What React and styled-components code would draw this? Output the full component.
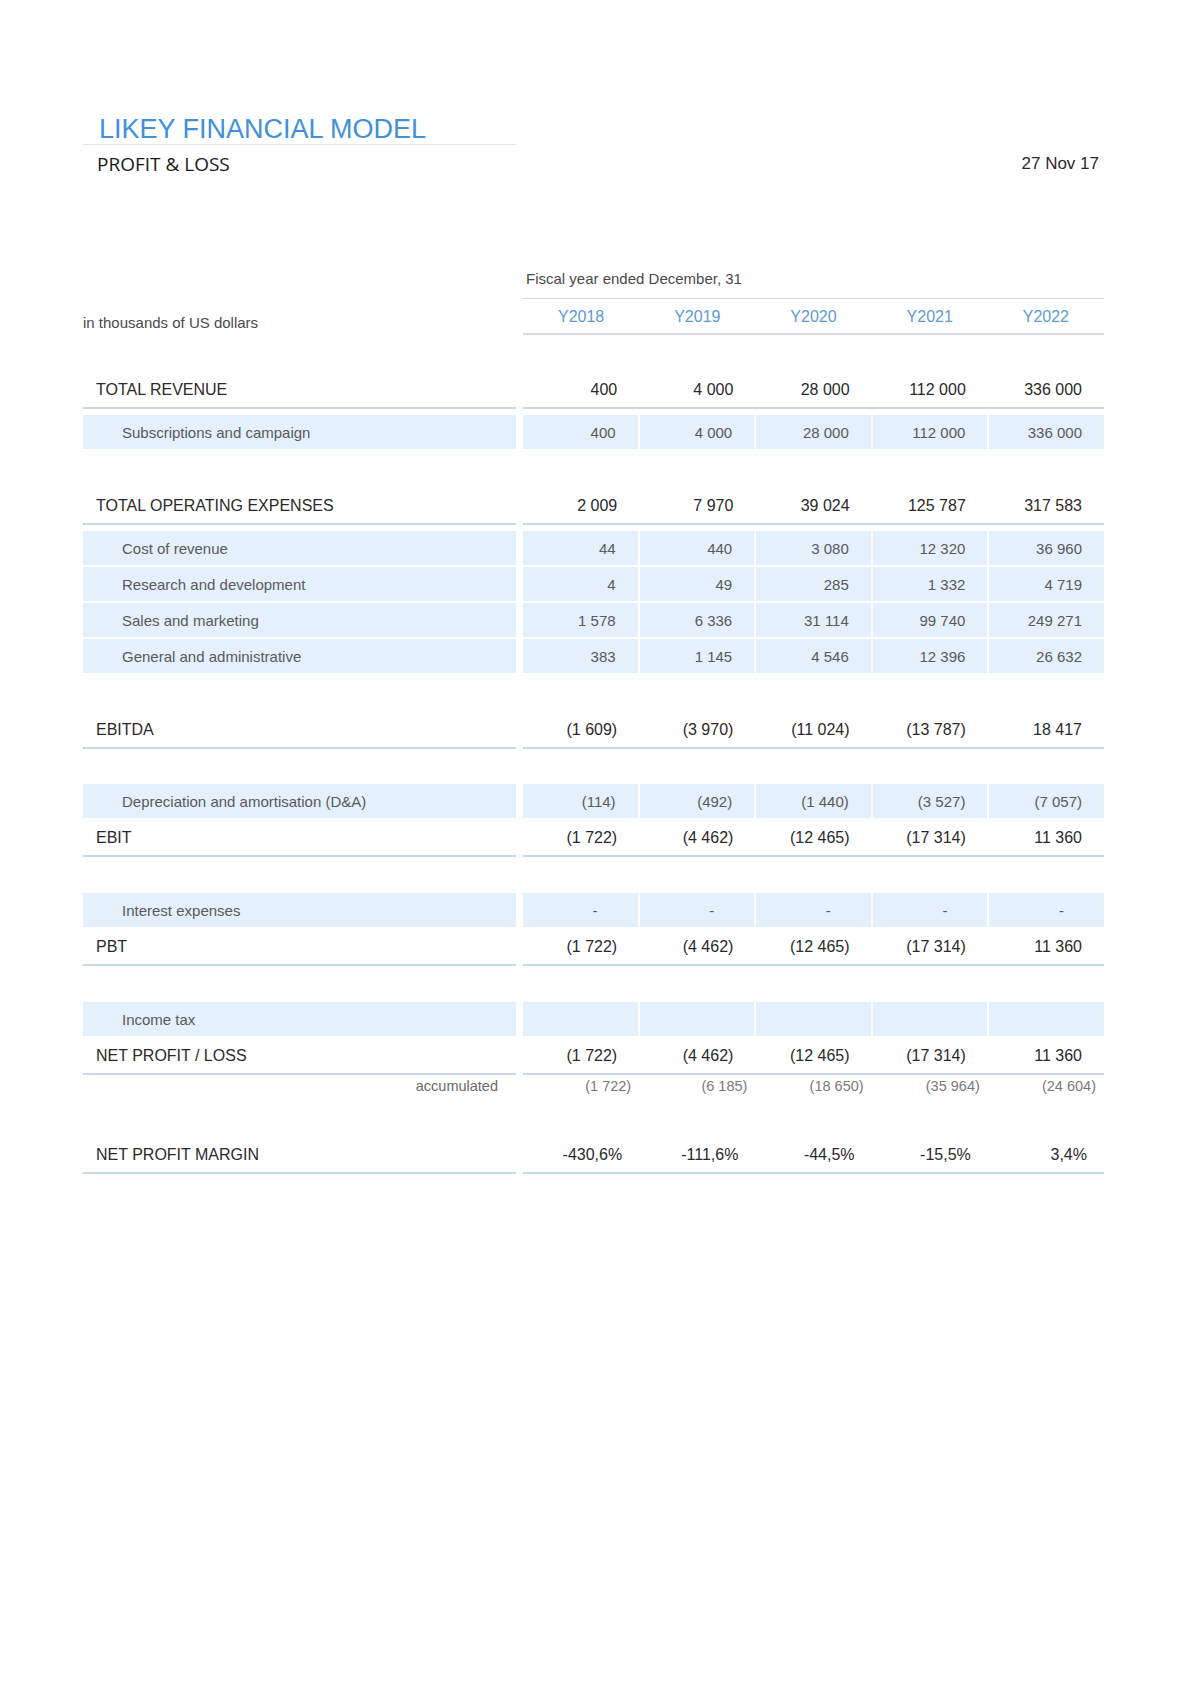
import React from 'react'
import styled, { createGlobalStyle } from 'styled-components'

const GlobalStyle = createGlobalStyle`
  body {
    margin: 0;
    background: #ffffff;
    font-family: "Liberation Sans", Arial, sans-serif;
  }
`

const Page = styled.div`
  width: 1200px;
  min-height: 1696px;
  box-sizing: border-box;
  padding: 114px 96px 0 83px;
  background: #ffffff;
`

const Header = styled.div`
  display: flex;
  justify-content: space-between;
  align-items: flex-start;
`

const TitleBlock = styled.div`
  width: 433px;
`

const Title = styled.h1`
  margin: 0;
  padding-left: 16px;
  font-family: "Liberation Sans", Arial, sans-serif;
  font-weight: 400;
  font-size: 27px;
  line-height: 30px;
  color: #4290da;
  border-bottom: 1px solid #dfe8f2;
`

const Subtitle = styled.div`
  margin-top: 7px;
  padding-left: 14px;
  font-family: "Open Sans", sans-serif;
  font-size: 19px;
  line-height: 24px;
  color: #1a1a1a;
`

const DateText = styled.div`
  margin-top: 39px;
  margin-right: 5px;
  font-size: 17px;
  line-height: 22px;
  color: #2a2a2a;
`

const TableHead = styled.div`
  display: grid;
  grid-template-columns: 433px 581px;
  column-gap: 7px;
  margin-top: 93px;
`

const Units = styled.div`
  align-self: end;
  margin-bottom: 2px;
  font-size: 15px;
  line-height: 20px;
  color: #4a4a4a;
`

const Caption = styled.div`
  padding-left: 3px;
  margin-bottom: 9px;
  font-size: 15px;
  line-height: 20px;
  color: #4a4a4a;
`

const Years = styled.div`
  display: grid;
  grid-template-columns: repeat(5, 1fr);
  height: 34px;
  border-top: 1px solid #d6dade;
  border-bottom: 2px solid #d6dade;
`

const Year = styled.div`
  display: flex;
  align-items: center;
  justify-content: center;
  padding-top: 1px;
  font-size: 16px;
  color: #5b9bd5;
`

const Section = styled.div`
  display: flex;
  flex-direction: column;
  margin-top: ${p => p.$gap || 36}px;
`

const MainRow = styled.div`
  display: grid;
  grid-template-columns: 433px 581px;
  column-gap: 7px;
  height: 39px;
`

const MainLabel = styled.div`
  display: flex;
  align-items: center;
  padding: 2px 0 0 13px;
  font-size: 16px;
  color: #2a2a2a;
  border-bottom: 2px solid #c8d8ea;
`

const MainValues = styled.div`
  display: grid;
  grid-template-columns: repeat(5, 1fr);
  border-bottom: 2px solid #c8d8ea;
`

const MainCell = styled.div`
  display: flex;
  align-items: center;
  justify-content: flex-end;
  padding: 2px ${p => p.$pad || 22}px 0 0;
  font-size: 16px;
  color: #2a2a2a;
`

const SubRow = styled.div`
  display: grid;
  grid-template-columns: 433px 581px;
  column-gap: 7px;
  height: 34px;

  & + & {
    margin-top: 2px;
  }
  ${MainRow} + & {
    margin-top: 6px;
  }
`

const SubLabel = styled.div`
  display: flex;
  align-items: center;
  padding-left: 39px;
  background: #e4f0fc;
  font-size: 15px;
  color: #5a5a5a;
`

const SubValues = styled.div`
  display: grid;
  grid-template-columns: repeat(5, 1fr);
  column-gap: 2px;
`

const SubCell = styled.div`
  display: flex;
  align-items: center;
  justify-content: flex-end;
  padding-right: ${p => p.$pad || 22}px;
  background: #e4f0fc;
  font-size: 15px;
  color: #5a5a5a;
`

const AccumRow = styled.div`
  display: grid;
  grid-template-columns: 433px 581px;
  column-gap: 7px;
  height: 22px;
`

const AccumLabel = styled.div`
  display: flex;
  align-items: center;
  justify-content: flex-end;
  padding-right: 18px;
  font-size: 14.5px;
  color: #6a6a6a;
`

const AccumValues = styled.div`
  display: grid;
  grid-template-columns: repeat(5, 1fr);
`

const AccumCell = styled.div`
  display: flex;
  align-items: center;
  justify-content: flex-end;
  padding-right: 8px;
  font-size: 14.5px;
  color: #7a7a7a;
`

const sections = [
  {
    gap: 35,
    rows: [
      { type: 'main', label: 'TOTAL REVENUE', values: ['400', '4 000', '28 000', '112 000', '336 000'] },
      { type: 'sub', label: 'Subscriptions and campaign', values: ['400', '4 000', '28 000', '112 000', '336 000'] },
    ],
  },
  {
    gap: 37,
    rows: [
      { type: 'main', label: 'TOTAL OPERATING EXPENSES', values: ['2 009', '7 970', '39 024', '125 787', '317 583'] },
      { type: 'sub', label: 'Cost of revenue', values: ['44', '440', '3 080', '12 320', '36 960'] },
      { type: 'sub', label: 'Research and development', values: ['4', '49', '285', '1 332', '4 719'] },
      { type: 'sub', label: 'Sales and marketing', values: ['1 578', '6 336', '31 114', '99 740', '249 271'] },
      { type: 'sub', label: 'General and administrative', values: ['383', '1 145', '4 546', '12 396', '26 632'] },
    ],
  },
  {
    gap: 37,
    rows: [
      { type: 'main', label: 'EBITDA', values: ['(1 609)', '(3 970)', '(11 024)', '(13 787)', '18 417'] },
    ],
  },
  {
    gap: 35,
    rows: [
      { type: 'sub', label: 'Depreciation and amortisation (D&A)', values: ['(114)', '(492)', '(1 440)', '(3 527)', '(7 057)'] },
      { type: 'main', label: 'EBIT', values: ['(1 722)', '(4 462)', '(12 465)', '(17 314)', '11 360'] },
    ],
  },
  {
    gap: 36,
    rows: [
      { type: 'sub', label: 'Interest expenses', values: ['-', '-', '-', '-', '-'], pad: 40 },
      { type: 'main', label: 'PBT', values: ['(1 722)', '(4 462)', '(12 465)', '(17 314)', '11 360'] },
    ],
  },
  {
    gap: 36,
    rows: [
      { type: 'sub', label: 'Income tax', values: ['', '', '', '', ''] },
      { type: 'main', label: 'NET PROFIT / LOSS', values: ['(1 722)', '(4 462)', '(12 465)', '(17 314)', '11 360'] },
      { type: 'accum', label: 'accumulated', values: ['(1 722)', '(6 185)', '(18 650)', '(35 964)', '(24 604)'] },
    ],
  },
  {
    gap: 38,
    rows: [
      { type: 'main', label: 'NET PROFIT MARGIN', values: ['-430,6%', '-111,6%', '-44,5%', '-15,5%', '3,4%'], pad: 17 },
    ],
  },
]

function Row({ row }) {
  if (row.type === 'main') {
    return (
      <MainRow>
        <MainLabel>{row.label}</MainLabel>
        <MainValues>
          {row.values.map((v, i) => <MainCell key={i} $pad={row.pad}>{v}</MainCell>)}
        </MainValues>
      </MainRow>
    )
  }
  if (row.type === 'sub') {
    return (
      <SubRow>
        <SubLabel>{row.label}</SubLabel>
        <SubValues>
          {row.values.map((v, i) => <SubCell key={i} $pad={row.pad}>{v}</SubCell>)}
        </SubValues>
      </SubRow>
    )
  }
  return (
    <AccumRow>
      <AccumLabel>{row.label}</AccumLabel>
      <AccumValues>
        {row.values.map((v, i) => <AccumCell key={i}>{v}</AccumCell>)}
      </AccumValues>
    </AccumRow>
  )
}

export default function App() {
  return (
    <>
      <GlobalStyle />
      <Page>
        <Header>
          <TitleBlock>
            <Title>LIKEY FINANCIAL MODEL</Title>
            <Subtitle>PROFIT &amp; LOSS</Subtitle>
          </TitleBlock>
          <DateText>27 Nov 17</DateText>
        </Header>

        <TableHead>
          <Units>in thousands of US dollars</Units>
          <div>
            <Caption>Fiscal year ended December, 31</Caption>
            <Years>
              {['Y2018', 'Y2019', 'Y2020', 'Y2021', 'Y2022'].map(y => <Year key={y}>{y}</Year>)}
            </Years>
          </div>
        </TableHead>

        {sections.map((s, i) => (
          <Section key={i} $gap={s.gap}>
            {s.rows.map((r, j) => <Row key={j} row={r} />)}
          </Section>
        ))}
      </Page>
    </>
  )
}
